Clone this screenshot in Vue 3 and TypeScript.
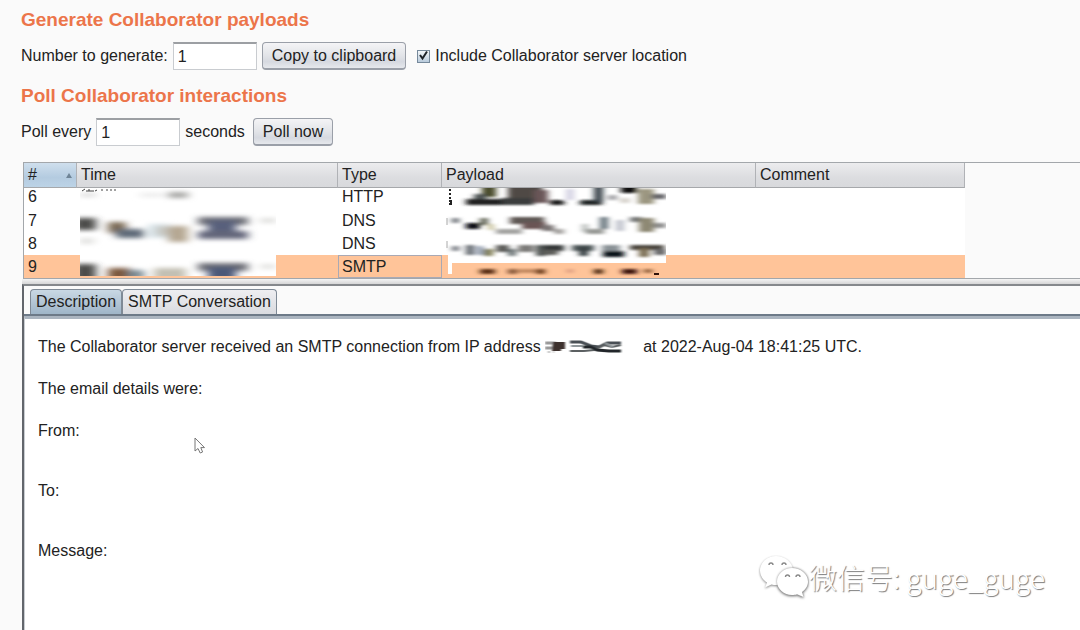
<script setup lang="ts">
import { ref } from 'vue'

interface Smudge { x: number; y: number; w: number; h: number; c: string }
interface Row { id: number; type: string }

const count = ref('1')
const seconds = ref('1')
const includeServer = ref(true)
const tab = ref('Description')
const tabs: string[] = ['Description', 'SMTP Conversation']
const selected = ref(9)
const rows: Row[] = [
  { id: 6, type: 'HTTP' },
  { id: 7, type: 'DNS' },
  { id: 8, type: 'DNS' },
  { id: 9, type: 'SMTP' },
]

const timeSmudges: Smudge[] = [
  { x: 88, y: 4, w: 20, h: 6, c: '#a8a8a6' },
  { x: 60, y: 5, w: 24, h: 4, c: '#ececec' },
  { x: 0, y: 5, w: 16, h: 4, c: '#dcdcdc' },
  { x: -6, y: 30, w: 22, h: 12, c: '#4c4c49' },
  { x: 28, y: 34, w: 18, h: 11, c: '#7c6a55' },
  { x: 36, y: 41, w: 28, h: 9, c: '#5f6a78' },
  { x: 68, y: 36, w: 22, h: 14, c: '#d8e4ea' },
  { x: 76, y: 38, w: 20, h: 10, c: '#c8c8c2' },
  { x: 88, y: 38, w: 20, h: 16, c: '#b5a793' },
  { x: 118, y: 29, w: 50, h: 8, c: '#6d6e76' },
  { x: 128, y: 32, w: 28, h: 14, c: '#58617c' },
  { x: 118, y: 43, w: 50, h: 8, c: '#64667a' },
  { x: 180, y: 30, w: 16, h: 5, c: '#e0e0de' },
  { x: 0, y: 50, w: 14, h: 6, c: '#e2e2e0' },
  { x: -6, y: 76, w: 22, h: 16, c: '#4c4c49' },
  { x: 28, y: 80, w: 22, h: 12, c: '#7b583e' },
  { x: 48, y: 82, w: 16, h: 9, c: '#7b8a93' },
  { x: 74, y: 80, w: 32, h: 12, c: '#c3c0b3' },
  { x: 118, y: 75, w: 50, h: 8, c: '#6d6e76' },
  { x: 128, y: 79, w: 28, h: 13, c: '#4c5878' },
  { x: 180, y: 76, w: 16, h: 5, c: '#e4e4e2' },
]

const payloadSmudges: Smudge[] = [
  { x: 36, y: -3, w: 14, h: 12, c: '#4a4b2c' },
  { x: 28, y: 6, w: 12, h: 6, c: '#505454' },
  { x: 20, y: 11, w: 38, h: 6, c: '#222420' },
  { x: 62, y: -3, w: 34, h: 15, c: '#4f4845' },
  { x: 56, y: 10, w: 32, h: 7, c: '#3a3c3c' },
  { x: 88, y: 2, w: 14, h: 13, c: '#6b5658' },
  { x: 104, y: 12, w: 14, h: 5, c: '#1c1c1c' },
  { x: 120, y: 1, w: 8, h: 11, c: '#d4d2e2' },
  { x: 134, y: 12, w: 22, h: 5, c: '#222628' },
  { x: 148, y: -3, w: 9, h: 17, c: '#39434a' },
  { x: 162, y: 7, w: 9, h: 5, c: '#a4a4a8' },
  { x: 175, y: -2, w: 16, h: 7, c: '#0c0c0c' },
  { x: 174, y: 10, w: 10, h: 5, c: '#d8d4ce' },
  { x: 192, y: 1, w: 16, h: 15, c: '#9b9680' },
  { x: 206, y: 6, w: 14, h: 5, c: '#67676c' },
  { x: 6, y: 30, w: 7, h: 5, c: '#70747a' },
  { x: 20, y: 35, w: 14, h: 6, c: '#101014' },
  { x: 34, y: 30, w: 8, h: 7, c: '#676a5c' },
  { x: 42, y: 36, w: 6, h: 6, c: '#cbc5a0' },
  { x: 50, y: 41, w: 26, h: 5, c: '#a4a4a2' },
  { x: 64, y: 29, w: 34, h: 7, c: '#5e5955' },
  { x: 76, y: 34, w: 24, h: 7, c: '#6a5454' },
  { x: 96, y: 37, w: 12, h: 6, c: '#7a7575' },
  { x: 108, y: 41, w: 10, h: 5, c: '#a5a3a0' },
  { x: 136, y: 36, w: 6, h: 8, c: '#b8bcba' },
  { x: 140, y: 41, w: 18, h: 5, c: '#989a96' },
  { x: 154, y: 29, w: 8, h: 12, c: '#65727a' },
  { x: 170, y: 32, w: 8, h: 11, c: '#c0c2cc' },
  { x: 184, y: 29, w: 12, h: 5, c: '#757778' },
  { x: 193, y: 30, w: 15, h: 14, c: '#8d8873' },
  { x: 208, y: 35, w: 12, h: 5, c: '#909090' },
  { x: 6, y: 58, w: 7, h: 5, c: '#747880' },
  { x: 20, y: 57, w: 8, h: 10, c: '#60666c' },
  { x: 30, y: 58, w: 8, h: 9, c: '#9fa8b8' },
  { x: 38, y: 61, w: 9, h: 7, c: '#807d52' },
  { x: 50, y: 57, w: 13, h: 7, c: '#5b5c58' },
  { x: 62, y: 61, w: 8, h: 7, c: '#6c7576' },
  { x: 72, y: 57, w: 16, h: 7, c: '#7c7a78' },
  { x: 90, y: 57, w: 10, h: 11, c: '#505452' },
  { x: 98, y: 57, w: 20, h: 6, c: '#353737' },
  { x: 96, y: 62, w: 16, h: 5, c: '#5d5d5a' },
  { x: 126, y: 57, w: 22, h: 6, c: '#50585a' },
  { x: 133, y: 59, w: 9, h: 9, c: '#353e3f' },
  { x: 156, y: 57, w: 18, h: 7, c: '#8a9296' },
  { x: 157, y: 63, w: 21, h: 6, c: '#10141e' },
  { x: 184, y: 57, w: 34, h: 5, c: '#4c4641' },
  { x: 193, y: 60, w: 10, h: 9, c: '#786b50' },
  { x: 208, y: 61, w: 12, h: 6, c: '#676869' },
]

const lowerSmudges: Smudge[] = [
  { x: 34, y: 81, w: 15, h: 5, c: '#5c3014' },
  { x: 62, y: 81, w: 9, h: 5, c: '#87583a' },
  { x: 72, y: 81, w: 18, h: 4, c: '#c58b62' },
  { x: 90, y: 81, w: 9, h: 5, c: '#70401f' },
  { x: 121, y: 81, w: 6, h: 4, c: '#dc9b80' },
  { x: 148, y: 81, w: 9, h: 5, c: '#553016' },
  { x: 176, y: 81, w: 15, h: 5, c: '#3c1409' },
  { x: 198, y: 81, w: 8, h: 4, c: '#90603c' },
]
</script>

<template>
  <main class="page">
    <section class="group">
      <h2>Generate Collaborator payloads</h2>
      <div class="line">
        <label for="count">Number to generate:</label>
        <input id="count" v-model="count" class="field" type="text" />
        <button type="button" class="btn">Copy to clipboard</button>
        <label class="check">
          <input v-model="includeServer" type="checkbox" />
          <svg v-if="includeServer" class="tick" width="13" height="13" viewBox="0 0 13 13" aria-hidden="true">
            <path d="M3 6L5.5 9.5L10 2.5" fill="none" stroke="#1d2228" stroke-width="2" />
          </svg>
          <span>Include Collaborator server location</span>
        </label>
      </div>
    </section>
    <section class="group">
      <h2>Poll Collaborator interactions</h2>
      <div class="line">
        <label for="seconds">Poll every</label>
        <input id="seconds" v-model="seconds" class="field" type="text" />
        <span>seconds</span>
        <button type="button" class="btn">Poll now</button>
      </div>
    </section>

    <div class="table-wrap">
      <table>
        <colgroup><col class="c-id" /><col class="c-time" /><col class="c-type" /><col class="c-pay" /><col class="c-com" /></colgroup>
        <thead>
          <tr>
            <th class="sorted">
              <span class="sort-head">#
                <svg width="6" height="5" viewBox="0 0 6 5" aria-hidden="true"><path d="M3 0L6 5H0Z" fill="#6f8496" /></svg>
              </span>
            </th>
            <th>Time</th><th>Type</th><th>Payload</th><th>Comment</th>
          </tr>
        </thead>
        <tbody>
          <tr v-for="row in rows" :key="row.id" :class="{ selected: row.id === selected }" @click="selected = row.id">
            <td>{{ row.id }}</td><td></td><td class="type">{{ row.type }}</td><td></td><td></td>
          </tr>
        </tbody>
      </table>
      <svg class="mask time-mask" width="196" height="88" viewBox="0 0 196 88" aria-hidden="true">
        <defs>
          <filter id="soft" filterUnits="userSpaceOnUse" x="-20" y="-20" width="260" height="130"><feGaussianBlur stdDeviation="5 2" /></filter>
        </defs>
        <rect width="196" height="88" fill="#fff" />
        <g filter="url(#soft)">
          <rect v-for="(s, i) in timeSmudges" :key="i" :x="s.x" :y="s.y" :width="s.w" :height="s.h" :fill="s.c" />
        </g>
        <path d="M2 3l3 -2M6 3h3M9 1v2h5M15 3l2 -1M22 1v2M27 1v2M31 1v2M35 1v2" stroke="#444" fill="none" />
      </svg>
      <svg class="mask payload-mask" width="220" height="90" viewBox="0 0 220 90" aria-hidden="true">
        <defs>
          <filter id="fine" filterUnits="userSpaceOnUse" x="-10" y="-10" width="240" height="110"><feGaussianBlur stdDeviation="3 1" /></filter>
        </defs>
        <path d="M2 0H220V75H6V86H2Z" fill="#fff" />
        <g filter="url(#fine)">
          <rect v-for="(s, i) in payloadSmudges" :key="i" :x="s.x" :y="s.y" :width="s.w" :height="s.h" :fill="s.c" />
          <rect v-for="(s, i) in lowerSmudges" :key="'l' + i" :x="s.x" :y="s.y" :width="s.w" :height="s.h" :fill="s.c" />
        </g>
        <path d="M4 1v2M4 5v2M4 9v2M3 13h2v3h-2" stroke="#222" stroke-width="2" fill="none" />
        <path d="M1 30v7M1 53v7" stroke="#aaa" fill="none" />
        <path d="M208 86h5" stroke="#30120a" stroke-width="2" fill="none" />
      </svg>
    </div>

    <div class="splitter"></div>

    <section class="details">
      <div class="tabs" role="tablist">
        <button v-for="name in tabs" :key="name" type="button" role="tab" :aria-selected="tab === name" class="tab" :class="{ active: tab === name }" @click="tab = name">{{ name }}</button>
      </div>
      <article class="message">
        <p>
          The Collaborator server received an SMTP connection from IP address
          <svg class="ip" width="98" height="16" viewBox="0 0 98 16" aria-hidden="true">
            <defs>
              <filter id="ipsoft" filterUnits="userSpaceOnUse" x="-5" y="-5" width="110" height="26"><feGaussianBlur stdDeviation="1 0.6" /></filter>
            </defs>
            <g filter="url(#ipsoft)" fill="none">
              <path d="M0 4h11M0 9h10" stroke="#999" stroke-width="3" />
              <path d="M8 3h12v7h-4v2h-9z" fill="#3c322e" />
              <path d="M3 13h2M8 13h1" stroke="#666" />
              <path d="M25 3h11l10 4 8 1 8-4h14" stroke="#4a5054" stroke-width="3" />
              <path d="M25 12h14l10-1 10-5 8 2 9-2" stroke="#5b6062" stroke-width="2" />
              <path d="M38 8h8l6 3 12 1h12" stroke="#23282a" stroke-width="3" />
              <path d="M26 7h12M60 4l8 4" stroke="#90979a" stroke-width="2" />
            </g>
          </svg>at 2022-Aug-04 18:41:25 UTC.
        </p>
        <p>The email details were:</p>
        <p class="entry">From:</p>
        <p class="entry">To:</p>
        <p class="entry">Message:</p>
      </article>
    </section>

    <svg class="pointer" width="12" height="18" viewBox="0 0 12 18" aria-hidden="true">
      <path d="M1 1V14L4 11.5L6.2 16L8.6 15L6.8 10.6H10.5Z" fill="#fff" stroke="#777" />
    </svg>

    <div class="watermark">
      <svg width="50" height="44" viewBox="0 0 50 44" aria-hidden="true">
        <path d="M17 1C8 1 1 7.500 1 15.500C1 20.500 4 25 8 27.500L6 32.500L12.500 29.500C14 30 15.500 30 17 30C26 30 34 23.500 34 15.500S26 1 17 1Z" fill="#fff" />
        <path class="front" d="M33 13C25 13 18 19 18 26.500S25 40 33 40C35 40 36.500 39.800 38 39.200L44.500 42L43 37C46.500 34.500 49 31 49 26.500C49 19 41.500 13 33 13Z" fill="#fff" />
        <path d="M10 10a2 2 0 0 1 4 0M23 10a2 2 0 0 1 4 0M26.500 22a2 2 0 0 1 4 0M37 22a2 2 0 0 1 4 0" fill="none" stroke="#888" stroke-width="1.400" />
      </svg>
      <span>微信号: guge_guge</span>
    </div>
  </main>
</template>

<style>
body { margin: 0; background: #fafafa; }
</style>
<style scoped>
.page {
  position: relative;
  display: flex;
  flex-direction: column;
  box-sizing: border-box;
  min-height: 100vh;
  padding: 8px 0 0 21px;
  overflow: hidden;
  font: 16px/20px "Liberation Sans", Arial, sans-serif;
  color: #222;
}
.group { margin-bottom: 14px; }
h2 { margin: 0 0 10px; font-size: 19px; line-height: 24px; color: #ec754a; }
.line { display: flex; gap: 5px; align-items: center; }
.field {
  box-sizing: border-box;
  width: 84px;
  height: 28px;
  padding: 0 4px;
  border: 1px solid #c9ccd0;
  border-top: 2px solid #9c9fa3;
  background: #fff;
  color: #222;
  font: inherit;
}
.btn {
  box-sizing: border-box;
  height: 28px;
  padding: 0 9px;
  border: 1px solid #9a9fa8;
  border-bottom-width: 2px;
  border-radius: 4px;
  background: linear-gradient(#f4f4f6, #e2e4e8 50%, #d6d9e0 75%, #e6e8ec);
  color: #222;
  font: inherit;
}
.line span + .btn { margin-left: 3px; }
.check { position: relative; display: flex; align-items: center; gap: 5px; margin-left: 6px; }
.check input {
  appearance: none;
  box-sizing: border-box;
  width: 13px;
  height: 13px;
  margin: 0;
  border: 1px solid #76899b;
  background: linear-gradient(#f2f6f9, #b9cbdc);
}
.tick { position: absolute; left: 0; top: 3px; pointer-events: none; }

.table-wrap {
  position: relative;
  margin: 2px 0 0 2px;
  border: 1px solid #a3a7ab;
  border-right: 0;
}
table { width: 941px; table-layout: fixed; border-collapse: separate; border-spacing: 0; background: #fff; }
.c-id { width: 53px; }
.c-time { width: 261px; }
.c-type { width: 104px; }
.c-pay { width: 314px; }
.c-com { width: 209px; }
th {
  box-sizing: border-box;
  height: 25px;
  padding: 0 4px;
  border-right: 1px solid #b0b2b6;
  border-bottom: 1px solid #a6a8ab;
  background: linear-gradient(#ececee, #dcdde0 60%, #d8d9dc);
  font-weight: normal;
  text-align: left;
}
.sorted { background: linear-gradient(#cfdfed, #b4cbe0 60%, #bcd3e6); }
.sort-head { display: flex; align-items: center; justify-content: space-between; }
td { box-sizing: border-box; height: 23px; padding: 0 4px; line-height: 21px; border: 1px solid transparent; border-width: 1px 0; }
tbody tr:first-child td { height: 21px; line-height: 17px; border-width: 0 0 4px; }
.selected td { background: #ffc499; }
.selected td.type { border: 1px solid #a9a9b4; padding: 0 3px; }
.mask { position: absolute; }
.time-mask { left: 56px; top: 25px; }
.payload-mask { left: 422px; top: 25px; }

.splitter {
  height: 5px;
  margin-left: 1px;
  background: linear-gradient(#f4f4f4, #d5d5d6);
}
.details {
  flex: 1;
  display: flex;
  flex-direction: column;
  margin-left: 1px;
  border-top: 2px solid #85888c;
  border-left: 2px solid #62666c;
}
.tabs {
  display: flex;
  padding: 3px 0 0 6px;
  border-bottom: 2px solid #6d7a88;
}
.tab {
  box-sizing: border-box;
  height: 25px;
  padding: 0 5px;
  border: 1px solid #7f8a96;
  border-bottom: 0;
  border-radius: 4px 4px 0 0;
  background: linear-gradient(#eeeef1, #d9dbe0);
  color: #222;
  font: inherit;
}
.tab.active { background: linear-gradient(#c9d8e4, #9fb5c8); }
.message {
  flex: 1;
  padding: 18px 13px 0;
  border-top: 3px solid #abb5c0;
  border-left: 1px solid #c9cdd2;
  background: #fff;
}
p { margin: 0 0 22px; }
.entry { margin-bottom: 40px; }
.ip { vertical-align: -3px; }
.pointer { position: absolute; left: 194px; top: 437px; }
.watermark {
  position: absolute;
  right: 35px;
  bottom: 31px;
  display: flex;
  align-items: center;
  color: #fff;
  font: 300 28px/44px "Noto Sans CJK SC", sans-serif;
  text-shadow: 1px 1px 1px #777;
}
.watermark svg { filter: drop-shadow(0 1px 1px #888); }
.front { filter: drop-shadow(0 0 1px #888); }
</style>
